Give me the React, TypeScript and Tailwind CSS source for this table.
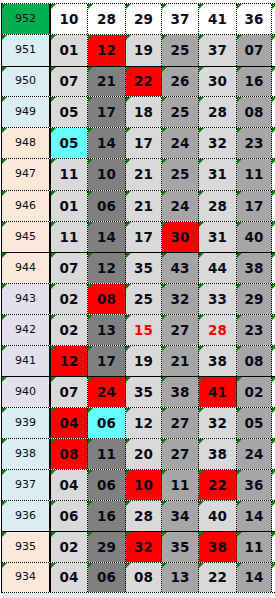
import React from 'react';

type Row = {
  id: string;
  label: string;
  h: string;
  solid?: boolean;
  nums: string[];
  marks?: Record<number, 'red' | 'cyan' | 'redText'>;
};

const rows: Row[] = [
  { id: '952', label: 'bg-[#00b050]', h: 'h-[31px]', nums: ['10', '28', '29', '37', '41', '36'] },
  { id: '951', label: 'bg-[#daeef3]', h: 'h-[32px]', solid: true, nums: ['01', '12', '19', '25', '37', '07'], marks: { 1: 'red' } },
  { id: '950', label: 'bg-[#daeef3]', h: 'h-[30px]', nums: ['07', '21', '22', '26', '30', '16'], marks: { 2: 'red' } },
  { id: '949', label: 'bg-[#daeef3]', h: 'h-[31px]', nums: ['05', '17', '18', '25', '28', '08'] },
  { id: '948', label: 'bg-[#fde9d9]', h: 'h-[31px]', nums: ['05', '14', '17', '24', '32', '23'], marks: { 0: 'cyan' } },
  { id: '947', label: 'bg-[#fde9d9]', h: 'h-[32px]', nums: ['11', '10', '21', '25', '31', '11'] },
  { id: '946', label: 'bg-[#fde9d9]', h: 'h-[31px]', nums: ['01', '06', '21', '24', '28', '17'] },
  { id: '945', label: 'bg-[#fde9d9]', h: 'h-[31px]', solid: true, nums: ['11', '14', '17', '30', '31', '40'], marks: { 3: 'red' } },
  { id: '944', label: 'bg-[#fde9d9]', h: 'h-[31px]', nums: ['07', '12', '35', '43', '44', '38'] },
  { id: '943', label: 'bg-[#e4dfec]', h: 'h-[31px]', nums: ['02', '08', '25', '32', '33', '29'], marks: { 1: 'red' } },
  { id: '942', label: 'bg-[#e4dfec]', h: 'h-[31px]', nums: ['02', '13', '15', '27', '28', '23'], marks: { 2: 'redText', 4: 'redText' } },
  { id: '941', label: 'bg-[#e4dfec]', h: 'h-[31px]', solid: true, nums: ['12', '17', '19', '21', '38', '08'], marks: { 0: 'red' } },
  { id: '940', label: 'bg-[#e4dfec]', h: 'h-[31px]', nums: ['07', '24', '35', '38', '41', '02'], marks: { 1: 'red', 4: 'red' } },
  { id: '939', label: 'bg-[#daeef3]', h: 'h-[31px]', nums: ['04', '06', '12', '27', '32', '05'], marks: { 0: 'red', 1: 'cyan' } },
  { id: '938', label: 'bg-[#daeef3]', h: 'h-[31px]', nums: ['08', '11', '20', '27', '38', '24'], marks: { 0: 'red' } },
  { id: '937', label: 'bg-[#daeef3]', h: 'h-[31px]', nums: ['04', '06', '10', '11', '22', '36'], marks: { 2: 'red', 4: 'red' } },
  { id: '936', label: 'bg-[#daeef3]', h: 'h-[31px]', solid: true, nums: ['06', '16', '28', '34', '40', '14'] },
  { id: '935', label: 'bg-[#fde9d9]', h: 'h-[31px]', nums: ['02', '29', '32', '35', '38', '11'], marks: { 2: 'red', 4: 'red' } },
  { id: '934', label: 'bg-[#fde9d9]', h: 'h-[30px]', nums: ['04', '06', '08', '13', '22', '14'] },
];

// column widths incl. right border, and the default fill of each number column
const cols = [
  { w: 'w-[37px]', bg: 'bg-[#d9d9d9]' },
  { w: 'w-[38px]', bg: 'bg-[#808080]' },
  { w: 'w-[36px]', bg: 'bg-[#d9d9d9]' },
  { w: 'w-[37px]', bg: 'bg-[#a6a6a6]' },
  { w: 'w-[38px]', bg: 'bg-[#d9d9d9]' },
  { w: 'w-[35px]', bg: 'bg-[#a6a6a6]' },
];

const Mark = () => (
  <span className="absolute top-0 left-0 w-0 h-0 border-t-[5px] border-r-[5px] border-t-[#008000] border-r-transparent" />
);

export default function App() {
  return (
    <div className="w-[275px] h-[598px] bg-white overflow-hidden pt-[3px] font-['DejaVu_Sans',sans-serif] text-[#0a0a1a]">
      <div className="ml-px border-t border-l border-black [border-top-style:dotted]">
        {rows.map((r, ri) => (
          <div
            key={r.id}
            className={`flex ${r.h} border-b border-black ${r.solid ? 'border-solid' : 'border-dotted'}`}
          >
            <div
              className={`relative w-[49px] flex items-center justify-center text-[11px] border-r-2 border-black border-solid ${r.label}`}
            >
              <Mark />
              {r.id}
            </div>
            {r.nums.map((n, ci) => {
              const m = r.marks?.[ci];
              let bg = ri === 0 ? 'bg-white' : cols[ci].bg;
              if (m === 'red') bg = 'bg-[#ff0000]';
              if (m === 'cyan') bg = 'bg-[#66ffff]';
              return (
                <div
                  key={ci}
                  className={`relative ${cols[ci].w} flex items-center justify-center text-[13.5px] font-bold border-r border-black border-dotted ${bg} ${m === 'redText' ? 'text-[#ff0000]' : ''}`}
                >
                  <Mark />
                  {n}
                </div>
              );
            })}
            <div className="relative w-[3px] overflow-hidden">
              <Mark />
            </div>
          </div>
        ))}
      </div>
      <div className="ml-[2px] w-[269px] h-[6px] bg-[#e3e6ea]" />
    </div>
  );
}
